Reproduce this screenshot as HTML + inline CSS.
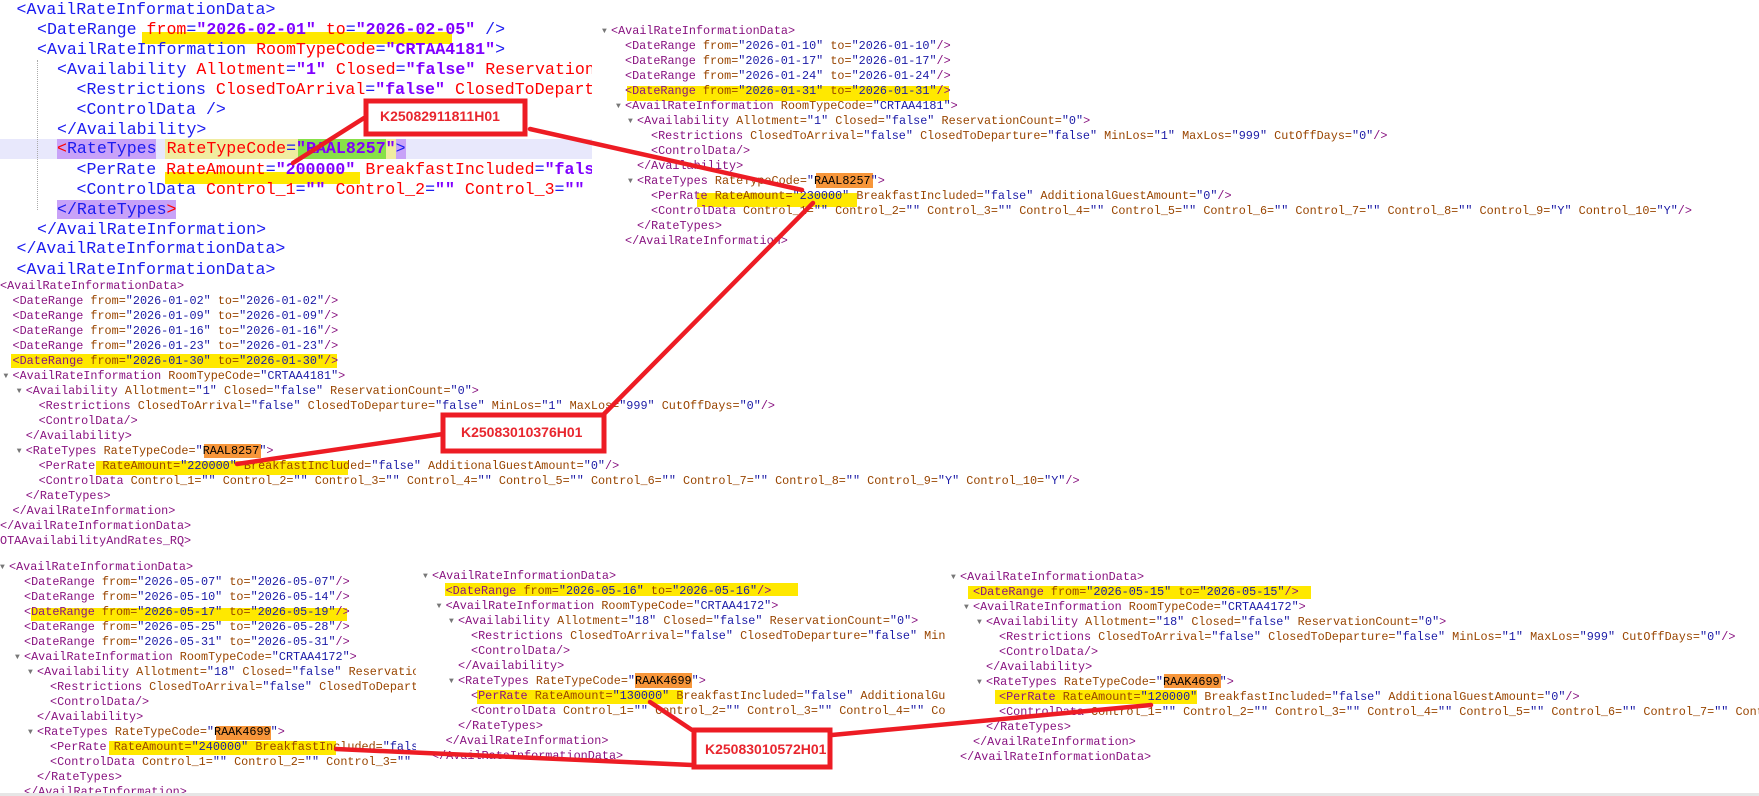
<!DOCTYPE html>
<html><head><meta charset="utf-8"><style>
body{margin:0;width:1759px;height:796px;background:#fff;position:relative;overflow:hidden}
.w{position:absolute;left:0;top:0;height:796px;overflow:hidden}
.s{position:absolute;font:11.8px/15px "Liberation Mono",monospace;white-space:pre;color:#881280}
.s i{font-style:normal;color:#994500}
.s em{font-style:normal;color:#1a1aa6}
.ar::before{content:"\25BC";position:absolute;left:-9px;top:0;font-size:8px;color:#777}
.b{position:absolute;font:16.6px/20px "Liberation Mono",monospace;white-space:pre;color:#1c1cf0}
.b i{font-style:normal;color:#f00}
.b em{font-style:normal;color:#8000ff;font-weight:bold}
.h{position:absolute}
.y{background:#ffe800}
.o{background:#f7963a}
.k{position:absolute;font:bold 14px "Liberation Sans",sans-serif;color:#e8262e}
</style></head><body>

<!-- big block -->
<div class="w" style="width:592px;height:282px">
<div class="h" style="left:0;top:139px;width:592px;height:20px;background:#e8e8fc"></div>
<div class="h y" style="left:142px;top:32px;width:310px;height:12px"></div>
<div class="h y" style="left:165px;top:172px;width:195px;height:12px"></div>
<div class="h" style="left:57px;top:139px;width:99px;height:20px;background:#c8a2f8"></div>
<div class="h" style="left:165px;top:139px;width:133px;height:20px;background:#f0eca0"></div>
<div class="h" style="left:298px;top:139px;width:88px;height:20px;background:#88e048"></div>
<div class="h" style="left:386px;top:139px;width:10px;height:20px;background:#f0eca0"></div>
<div class="h" style="left:396px;top:139px;width:10px;height:20px;background:#c8a2f8"></div>
<div class="h" style="left:57px;top:200px;width:119px;height:19px;background:#c8a2f8"></div>
<div class="h" style="left:37px;top:60px;width:0;height:150px;border-left:1px dotted #aaa"></div>
<div class="b" style="left:16.5px;top:0px">&lt;AvailRateInformationData&gt;</div>
<div class="b" style="left:37px;top:20px">&lt;DateRange <i>from</i>=<em>"2026-02-01"</em> <i>to</i>=<em>"2026-02-05"</em> /&gt;</div>
<div class="b" style="left:37px;top:40px">&lt;AvailRateInformation <i>RoomTypeCode</i>=<em>"CRTAA4181"</em>&gt;</div>
<div class="b" style="left:57px;top:60px">&lt;Availability <i>Allotment</i>=<em>"1"</em> <i>Closed</i>=<em>"false"</em> <i>ReservationCount</i>=<em>"0"</em>&gt;</div>
<div class="b" style="left:76.5px;top:80px">&lt;Restrictions <i>ClosedToArrival</i>=<em>"false"</em> <i>ClosedToDeparture</i>=<em>"false"</em></div>
<div class="b" style="left:76.5px;top:100px">&lt;ControlData /&gt;</div>
<div class="b" style="left:57px;top:120px">&lt;/Availability&gt;</div>
<div class="b" style="left:57px;top:139px"><span style="color:#f00">&lt;</span>RateTypes <i>RateTypeCode</i>=<em>"RAAL8257"</em>&gt;</div>
<div class="b" style="left:76.5px;top:160px">&lt;PerRate <i>RateAmount</i>=<em>"200000"</em> <i>BreakfastIncluded</i>=<em>"false"</em></div>
<div class="b" style="left:76.5px;top:180px">&lt;ControlData <i>Control_1</i>=<em>""</em> <i>Control_2</i>=<em>""</em> <i>Control_3</i>=<em>""</em></div>
<div class="b" style="left:57px;top:200px">&lt;/RateTypes<span style="color:#f00">&gt;</span></div>
<div class="b" style="left:37px;top:220px">&lt;/AvailRateInformation&gt;</div>
<div class="b" style="left:16.5px;top:239px">&lt;/AvailRateInformationData&gt;</div>
<div class="b" style="left:16.5px;top:260px">&lt;AvailRateInformationData&gt;</div>
</div>

<!-- block C -->
<div class="h y" style="left:627px;top:86px;width:322px;height:15px"></div>
<div class="h o" style="left:816px;top:173px;width:57px;height:15px"></div>
<div class="h y" style="left:697px;top:193px;width:160px;height:14px"></div>
<div class="s ar" style="left:611px;top:23.5px">&lt;AvailRateInformationData&gt;</div>
<div class="s" style="left:625px;top:38.5px">&lt;DateRange <i>from=</i><em>"2026-01-10"</em> <i>to=</i><em>"2026-01-10"</em>/&gt;</div>
<div class="s" style="left:625px;top:53.5px">&lt;DateRange <i>from=</i><em>"2026-01-17"</em> <i>to=</i><em>"2026-01-17"</em>/&gt;</div>
<div class="s" style="left:625px;top:68.5px">&lt;DateRange <i>from=</i><em>"2026-01-24"</em> <i>to=</i><em>"2026-01-24"</em>/&gt;</div>
<div class="s" style="left:625px;top:83.5px">&lt;DateRange <i>from=</i><em>"2026-01-31"</em> <i>to=</i><em>"2026-01-31"</em>/&gt;</div>
<div class="s ar" style="left:625px;top:98.5px">&lt;AvailRateInformation <i>RoomTypeCode=</i><em>"CRTAA4181"</em>&gt;</div>
<div class="s ar" style="left:637px;top:113.5px">&lt;Availability <i>Allotment=</i><em>"1"</em> <i>Closed=</i><em>"false"</em> <i>ReservationCount=</i><em>"0"</em>&gt;</div>
<div class="s" style="left:651px;top:128.5px">&lt;Restrictions <i>ClosedToArrival=</i><em>"false"</em> <i>ClosedToDeparture=</i><em>"false"</em> <i>MinLos=</i><em>"1"</em> <i>MaxLos=</i><em>"999"</em> <i>CutOffDays=</i><em>"0"</em>/&gt;</div>
<div class="s" style="left:651px;top:143.5px">&lt;ControlData/&gt;</div>
<div class="s" style="left:637px;top:158.5px">&lt;/Availability&gt;</div>
<div class="s ar" style="left:637px;top:173.5px">&lt;RateTypes <i>RateTypeCode=</i><em>"<span style="color:#000">RAAL8257</span>"</em>&gt;</div>
<div class="s" style="left:651px;top:188.5px">&lt;PerRate <i>RateAmount=</i><em>"230000"</em> <i>BreakfastIncluded=</i><em>"false"</em> <i>AdditionalGuestAmount=</i><em>"0"</em>/&gt;</div>
<div class="s" style="left:651px;top:203.5px">&lt;ControlData <i>Control_1=</i><em>""</em> <i>Control_2=</i><em>""</em> <i>Control_3=</i><em>""</em> <i>Control_4=</i><em>""</em> <i>Control_5=</i><em>""</em> <i>Control_6=</i><em>""</em> <i>Control_7=</i><em>""</em> <i>Control_8=</i><em>""</em> <i>Control_9=</i><em>"Y"</em> <i>Control_10=</i><em>"Y"</em>/&gt;</div>
<div class="s" style="left:637px;top:218.5px">&lt;/RateTypes&gt;</div>
<div class="s" style="left:625px;top:233.5px">&lt;/AvailRateInformation&gt;</div>

<!-- block B -->
<div class="h y" style="left:11px;top:354px;width:326px;height:14px"></div>
<div class="h o" style="left:204px;top:444px;width:57px;height:14px"></div>
<div class="h y" style="left:96px;top:461px;width:252px;height:14px"></div>
<div class="s" style="left:0px;top:279px">&lt;AvailRateInformationData&gt;</div>
<div class="s" style="left:12.5px;top:294px">&lt;DateRange <i>from=</i><em>"2026-01-02"</em> <i>to=</i><em>"2026-01-02"</em>/&gt;</div>
<div class="s" style="left:12.5px;top:309px">&lt;DateRange <i>from=</i><em>"2026-01-09"</em> <i>to=</i><em>"2026-01-09"</em>/&gt;</div>
<div class="s" style="left:12.5px;top:324px">&lt;DateRange <i>from=</i><em>"2026-01-16"</em> <i>to=</i><em>"2026-01-16"</em>/&gt;</div>
<div class="s" style="left:12.5px;top:339px">&lt;DateRange <i>from=</i><em>"2026-01-23"</em> <i>to=</i><em>"2026-01-23"</em>/&gt;</div>
<div class="s" style="left:12.5px;top:354px">&lt;DateRange <i>from=</i><em>"2026-01-30"</em> <i>to=</i><em>"2026-01-30"</em>/&gt;</div>
<div class="s ar" style="left:12.5px;top:369px">&lt;AvailRateInformation <i>RoomTypeCode=</i><em>"CRTAA4181"</em>&gt;</div>
<div class="s ar" style="left:25.7px;top:384px">&lt;Availability <i>Allotment=</i><em>"1"</em> <i>Closed=</i><em>"false"</em> <i>ReservationCount=</i><em>"0"</em>&gt;</div>
<div class="s" style="left:38.6px;top:399px">&lt;Restrictions <i>ClosedToArrival=</i><em>"false"</em> <i>ClosedToDeparture=</i><em>"false"</em> <i>MinLos=</i><em>"1"</em> <i>MaxLos=</i><em>"999"</em> <i>CutOffDays=</i><em>"0"</em>/&gt;</div>
<div class="s" style="left:38.6px;top:414px">&lt;ControlData/&gt;</div>
<div class="s" style="left:25.7px;top:429px">&lt;/Availability&gt;</div>
<div class="s ar" style="left:25.7px;top:444px">&lt;RateTypes <i>RateTypeCode=</i><em>"<span style="color:#000">RAAL8257</span>"</em>&gt;</div>
<div class="s" style="left:38.6px;top:459px">&lt;PerRate <i>RateAmount=</i><em>"220000"</em> <i>BreakfastIncluded=</i><em>"false"</em> <i>AdditionalGuestAmount=</i><em>"0"</em>/&gt;</div>
<div class="s" style="left:38.6px;top:474px">&lt;ControlData <i>Control_1=</i><em>""</em> <i>Control_2=</i><em>""</em> <i>Control_3=</i><em>""</em> <i>Control_4=</i><em>""</em> <i>Control_5=</i><em>""</em> <i>Control_6=</i><em>""</em> <i>Control_7=</i><em>""</em> <i>Control_8=</i><em>""</em> <i>Control_9=</i><em>"Y"</em> <i>Control_10=</i><em>"Y"</em>/&gt;</div>
<div class="s" style="left:25.7px;top:489px">&lt;/RateTypes&gt;</div>
<div class="s" style="left:12.5px;top:504px">&lt;/AvailRateInformation&gt;</div>
<div class="s" style="left:0px;top:519px">&lt;/AvailRateInformationData&gt;</div>
<div class="s" style="left:0px;top:534px">OTAAvailabilityAndRates_RQ&gt;</div>

<!-- block D -->
<div class="w" style="width:416px">
<div class="h y" style="left:31px;top:608px;width:316px;height:13px"></div>
<div class="h o" style="left:216px;top:726px;width:55px;height:14px"></div>
<div class="h y" style="left:109px;top:741px;width:227px;height:14px"></div>
<div class="s ar" style="left:9px;top:560px">&lt;AvailRateInformationData&gt;</div>
<div class="s" style="left:24px;top:575px">&lt;DateRange <i>from=</i><em>"2026-05-07"</em> <i>to=</i><em>"2026-05-07"</em>/&gt;</div>
<div class="s" style="left:24px;top:590px">&lt;DateRange <i>from=</i><em>"2026-05-10"</em> <i>to=</i><em>"2026-05-14"</em>/&gt;</div>
<div class="s" style="left:24px;top:605px">&lt;DateRange <i>from=</i><em>"2026-05-17"</em> <i>to=</i><em>"2026-05-19"</em>/&gt;</div>
<div class="s" style="left:24px;top:620px">&lt;DateRange <i>from=</i><em>"2026-05-25"</em> <i>to=</i><em>"2026-05-28"</em>/&gt;</div>
<div class="s" style="left:24px;top:635px">&lt;DateRange <i>from=</i><em>"2026-05-31"</em> <i>to=</i><em>"2026-05-31"</em>/&gt;</div>
<div class="s ar" style="left:24px;top:650px">&lt;AvailRateInformation <i>RoomTypeCode=</i><em>"CRTAA4172"</em>&gt;</div>
<div class="s ar" style="left:37px;top:665px">&lt;Availability <i>Allotment=</i><em>"18"</em> <i>Closed=</i><em>"false"</em> <i>ReservationCount=</i><em>"0"</em>&gt;</div>
<div class="s" style="left:50px;top:680px">&lt;Restrictions <i>ClosedToArrival=</i><em>"false"</em> <i>ClosedToDeparture=</i><em>"false"</em></div>
<div class="s" style="left:50px;top:695px">&lt;ControlData/&gt;</div>
<div class="s" style="left:37px;top:710px">&lt;/Availability&gt;</div>
<div class="s ar" style="left:37px;top:725px">&lt;RateTypes <i>RateTypeCode=</i><em>"<span style="color:#000">RAAK4699</span>"</em>&gt;</div>
<div class="s" style="left:50px;top:740px">&lt;PerRate <i>RateAmount=</i><em>"240000"</em> <i>BreakfastIncluded=</i><em>"false"</em></div>
<div class="s" style="left:50px;top:755px">&lt;ControlData <i>Control_1=</i><em>""</em> <i>Control_2=</i><em>""</em> <i>Control_3=</i><em>""</em></div>
<div class="s" style="left:37px;top:770px">&lt;/RateTypes&gt;</div>
<div class="s" style="left:24px;top:785px">&lt;/AvailRateInformation&gt;</div>
</div>

<!-- block E -->
<div class="w" style="width:945px">
<div class="h y" style="left:445px;top:583px;width:353px;height:13px"></div>
<div class="h o" style="left:635px;top:673px;width:57px;height:15px"></div>
<div class="h y" style="left:477px;top:690px;width:206px;height:14px"></div>
<div class="s ar" style="left:432px;top:568.5px">&lt;AvailRateInformationData&gt;</div>
<div class="s" style="left:445.6px;top:583.5px">&lt;DateRange <i>from=</i><em>"2026-05-16"</em> <i>to=</i><em>"2026-05-16"</em>/&gt;</div>
<div class="s ar" style="left:445.6px;top:598.5px">&lt;AvailRateInformation <i>RoomTypeCode=</i><em>"CRTAA4172"</em>&gt;</div>
<div class="s ar" style="left:458px;top:613.5px">&lt;Availability <i>Allotment=</i><em>"18"</em> <i>Closed=</i><em>"false"</em> <i>ReservationCount=</i><em>"0"</em>&gt;</div>
<div class="s" style="left:471px;top:628.5px">&lt;Restrictions <i>ClosedToArrival=</i><em>"false"</em> <i>ClosedToDeparture=</i><em>"false"</em> <i>MinLos=</i><em>"1"</em></div>
<div class="s" style="left:471px;top:643.5px">&lt;ControlData/&gt;</div>
<div class="s" style="left:458px;top:658.5px">&lt;/Availability&gt;</div>
<div class="s ar" style="left:458px;top:673.5px">&lt;RateTypes <i>RateTypeCode=</i><em>"<span style="color:#000">RAAK4699</span>"</em>&gt;</div>
<div class="s" style="left:471px;top:688.5px">&lt;PerRate <i>RateAmount=</i><em>"130000"</em> <i>BreakfastIncluded=</i><em>"false"</em> <i>AdditionalGuestAmount=</i><em>"0"</em>/&gt;</div>
<div class="s" style="left:471px;top:703.5px">&lt;ControlData <i>Control_1=</i><em>""</em> <i>Control_2=</i><em>""</em> <i>Control_3=</i><em>""</em> <i>Control_4=</i><em>""</em> <i>Control_5=</i><em>""</em></div>
<div class="s" style="left:458px;top:718.5px">&lt;/RateTypes&gt;</div>
<div class="s" style="left:445.6px;top:733.5px">&lt;/AvailRateInformation&gt;</div>
<div class="s" style="left:432px;top:748.5px">&lt;/AvailRateInformationData&gt;</div>
</div>

<!-- block F -->
<div class="h y" style="left:968px;top:586px;width:343px;height:13px"></div>
<div class="h o" style="left:1164px;top:674px;width:57px;height:14px"></div>
<div class="h y" style="left:995px;top:690px;width:202px;height:14px"></div>
<div class="s ar" style="left:960px;top:569.5px">&lt;AvailRateInformationData&gt;</div>
<div class="s" style="left:973px;top:584.5px">&lt;DateRange <i>from=</i><em>"2026-05-15"</em> <i>to=</i><em>"2026-05-15"</em>/&gt;</div>
<div class="s ar" style="left:973px;top:599.5px">&lt;AvailRateInformation <i>RoomTypeCode=</i><em>"CRTAA4172"</em>&gt;</div>
<div class="s ar" style="left:986px;top:614.5px">&lt;Availability <i>Allotment=</i><em>"18"</em> <i>Closed=</i><em>"false"</em> <i>ReservationCount=</i><em>"0"</em>&gt;</div>
<div class="s" style="left:999px;top:629.5px">&lt;Restrictions <i>ClosedToArrival=</i><em>"false"</em> <i>ClosedToDeparture=</i><em>"false"</em> <i>MinLos=</i><em>"1"</em> <i>MaxLos=</i><em>"999"</em> <i>CutOffDays=</i><em>"0"</em>/&gt;</div>
<div class="s" style="left:999px;top:644.5px">&lt;ControlData/&gt;</div>
<div class="s" style="left:986px;top:659.5px">&lt;/Availability&gt;</div>
<div class="s ar" style="left:986px;top:674.5px">&lt;RateTypes <i>RateTypeCode=</i><em>"<span style="color:#000">RAAK4699</span>"</em>&gt;</div>
<div class="s" style="left:999px;top:689.5px">&lt;PerRate <i>RateAmount=</i><em>"120000"</em> <i>BreakfastIncluded=</i><em>"false"</em> <i>AdditionalGuestAmount=</i><em>"0"</em>/&gt;</div>
<div class="s" style="left:999px;top:704.5px">&lt;ControlData <i>Control_1=</i><em>""</em> <i>Control_2=</i><em>""</em> <i>Control_3=</i><em>""</em> <i>Control_4=</i><em>""</em> <i>Control_5=</i><em>""</em> <i>Control_6=</i><em>""</em> <i>Control_7=</i><em>""</em> <i>Control_8=</i><em>""</em></div>
<div class="s" style="left:986px;top:719.5px">&lt;/RateTypes&gt;</div>
<div class="s" style="left:973px;top:734.5px">&lt;/AvailRateInformation&gt;</div>
<div class="s" style="left:960px;top:749.5px">&lt;/AvailRateInformationData&gt;</div>

<div class="h" style="left:0;top:793px;width:1759px;height:3px;background:#e6e6e6"></div>

<svg class="h" style="left:0;top:0" width="1759" height="796">
<g stroke="#ed1c24" stroke-width="4.5" fill="none" stroke-linecap="round">
<line x1="364" y1="118" x2="293" y2="163"/>
<line x1="530" y1="129" x2="802" y2="190"/>
<line x1="604" y1="414" x2="813" y2="203"/>
<line x1="443" y1="434" x2="237" y2="464"/>
<line x1="692" y1="730" x2="650" y2="702"/>
<line x1="832" y1="735" x2="1151" y2="705"/>
<line x1="692" y1="765" x2="336" y2="749"/>
</g>
<g stroke="#ed1c24" stroke-width="5" fill="#fff">
<rect x="366" y="101" width="159" height="33"/>
<rect x="443" y="415" width="161" height="36"/>
<rect x="694" y="730" width="136" height="37"/>
</g>
</svg>
<div class="k" style="left:380px;top:108px">K25082911811H01</div>
<div class="k" style="left:461px;top:424px">K25083010376H01</div>
<div class="k" style="left:705px;top:741px">K25083010572H01</div>
</body></html>
